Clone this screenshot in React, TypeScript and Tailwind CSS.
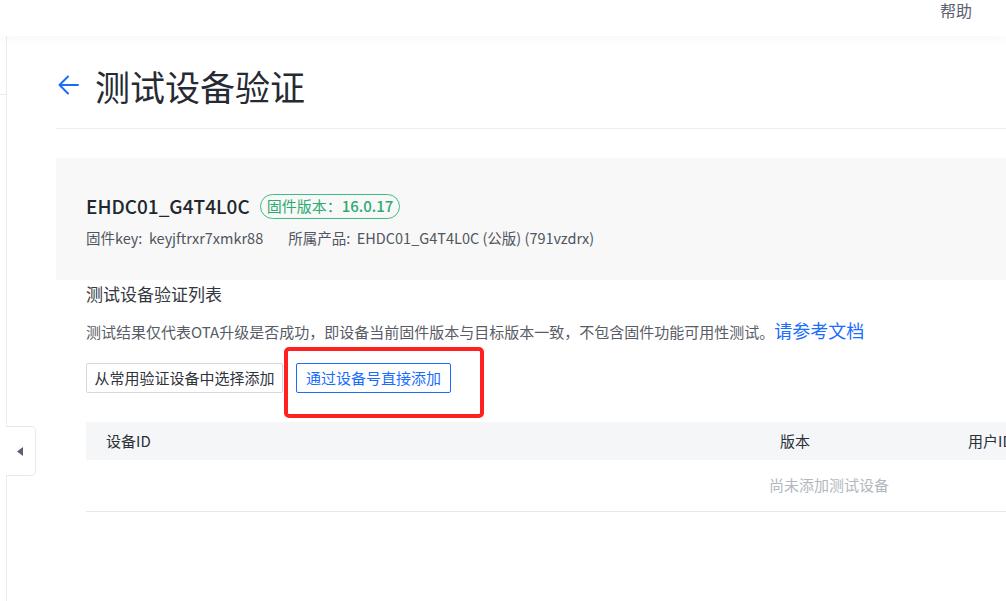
import React from "react";

const font = "font-['Noto_Sans_CJK_SC','Noto_Sans',sans-serif]";

const App = () => {
  return (
    <div className={`relative h-[601px] w-[1006px] overflow-hidden bg-white ${font}`}>
      {/* top bar */}
      <header className="relative z-10 flex h-[36px] justify-end pr-[34px] shadow-[0_3px_10px_rgba(0,0,0,0.035)]">
        <span className="pt-[1px] text-[16px] leading-[19px] text-[#5b6172]">帮助</span>
      </header>

      <div className="flex">
        <aside className="h-[565px] w-[7px] shrink-0 border-r border-[#e9ebf3]">
          <div className="h-[59px] border-b border-[#e9ebf3]" />
        </aside>

        <main className="w-[1600px] shrink-0 pl-[49px]">
          <div className="flex h-[93px] items-start gap-[15px] border-b border-[#e8edf6] pt-[30px]">
            <svg width="23" height="40" viewBox="0 0 23 40" className="ml-[1px] -mt-[1px]">
              <path d="M21 20H3M11 11.5L2.5 20L11 28.5" fill="none" stroke="#1a6cff" strokeWidth="2" strokeLinecap="round" strokeLinejoin="round" />
            </svg>
            <h1 className="text-[35px] leading-[40px] text-[#262a33]">测试设备验证</h1>
          </div>

          <div className="mt-[29px] h-[122px] bg-[#f8f8f8] pl-[30px] pt-[34px]">
            <div className="flex h-[28px] items-center">
              <span className="text-[19px] font-medium leading-[28px] text-[#22262e]">EHDC01_G4T4L0C</span>
              <span className="ml-[10px] flex h-[25px] items-center rounded-full border border-[#3dbd86] px-[6px] text-[15px] text-[#2bab72]">
                固件版本：<span className="font-medium">16.0.17</span>
              </span>
            </div>
            <div className="mt-[8px] flex text-[14.5px] leading-[20px] text-[#505560]">
              <span>固件key:&nbsp; keyjftrxr7xmkr88</span>
              <span className="ml-[25px]">所属产品:&nbsp; EHDC01_G4T4L0C (公版) (791vzdrx)</span>
            </div>
          </div>

          <div className="pl-[30px]">
            <h2 className="mt-[2px] text-[17px] leading-[24px] text-[#333740]">测试设备验证列表</h2>
            <p className="mt-[12px] flex items-baseline text-[15px] leading-[24px] text-[#585c66]">
              测试结果仅代表OTA升级是否成功，即设备当前固件版本与目标版本一致，不包含固件功能可用性测试。
              <a className="text-[18px] text-[#1a6cff]">请参考文档</a>
            </p>

            <div className="mt-[19px] flex gap-[13px]">
              <button className="h-[30px] w-[197px] rounded-[2px] border border-[#d5d7dc] bg-white text-[15px] text-[#2f333b]">
                从常用验证设备中选择添加
              </button>
              <button className="h-[30px] rounded-[2px] border border-[#1a6cff] bg-white px-[9px] text-[15px] text-[#1a6cff]">
                通过设备号直接添加
              </button>
            </div>

            <div className="mt-[29px] w-[1486px]">
              <div className="grid h-[38px] grid-cols-[674px_188px_1fr] items-center bg-[#f5f6f8] text-[15px] text-[#2c3039]">
                <span className="pl-[20px]">设备ID</span>
                <span className="pl-[20px]">版本</span>
                <span className="pl-[20px]">用户ID</span>
              </div>
              <div className="flex h-[52px] items-center justify-center border-b border-[#e6e8ef] text-[15px] text-[#b2b7c1]">
                尚未添加测试设备
              </div>
            </div>
          </div>
        </main>
      </div>

      {/* sidebar collapse handle */}
      <div className="absolute left-[6px] top-[426px] flex h-[50px] w-[30px] items-center justify-center rounded-r-[5px] border border-l-0 border-[#e6e8ef] bg-white">
        <svg width="8" height="11" viewBox="0 0 8 11" className="-ml-[2px]">
          <path d="M7 1L1 5.5L7 10Z" fill="#5a6072" />
        </svg>
      </div>

      {/* red highlight annotation */}
      <div className="absolute left-[284px] top-[347px] h-[71px] w-[200px] rounded-[5px] border-[4px] border-[#ff2020]" />
    </div>
  );
};

export default App;
